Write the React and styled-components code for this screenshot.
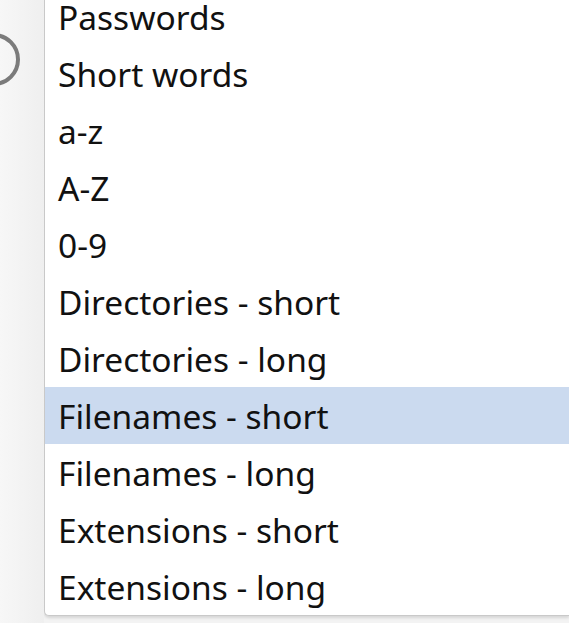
import React from "react";
import styled, { createGlobalStyle } from "styled-components";

const Global = createGlobalStyle`
  html, body { margin: 0; padding: 0; height: 100%; overflow: hidden; }
  body { background: #f3f3f3; font-family: "Noto Sans", "Open Sans", sans-serif; }
  #root { height: 100%; }
`;

const Page = styled.div`
  display: flex;
  height: 623px;
  overflow: hidden;
`;

const Side = styled.div`
  position: relative;
  width: 44px;
  flex: none;
  background: linear-gradient(to right, #f7f7f7, #efefef);
  overflow: hidden;
`;

const Ring = styled.div`
  position: absolute;
  left: -33px;
  top: 33px;
  width: 45px;
  height: 45px;
  border: 4.5px solid #7b7b7b;
  border-radius: 50%;
`;

const Menu = styled.ul`
  list-style: none;
  margin: -12px 0 0 0;
  padding: 0;
  flex: 1;
  align-self: flex-start;
  background: #ffffff;
  border-left: 1px solid #c9c9c9;
  border-bottom: 1px solid #c9c9c9;
  border-bottom-left-radius: 5px;
  box-shadow: 0 2px 3px rgba(0, 0, 0, 0.12);
`;

const Item = styled.li`
  height: 57px;
  display: flex;
  align-items: center;
  padding-left: 13px;
  font-size: 33.5px;
  color: #111;
  background: ${(p) => (p.$active ? "#cbdaef" : "transparent")};
  white-space: nowrap;
`;

const items = [
  "Passwords",
  "Short words",
  "a-z",
  "A-Z",
  "0-9",
  "Directories - short",
  "Directories - long",
  "Filenames - short",
  "Filenames - long",
  "Extensions - short",
  "Extensions - long",
];

export default function App() {
  return (
    <>
      <Global />
      <Page>
        <Side>
          <Ring />
        </Side>
        <Menu>
          {items.map((t) => (
            <Item key={t} $active={t === "Filenames - short"}>
              {t}
            </Item>
          ))}
        </Menu>
      </Page>
    </>
  );
}
